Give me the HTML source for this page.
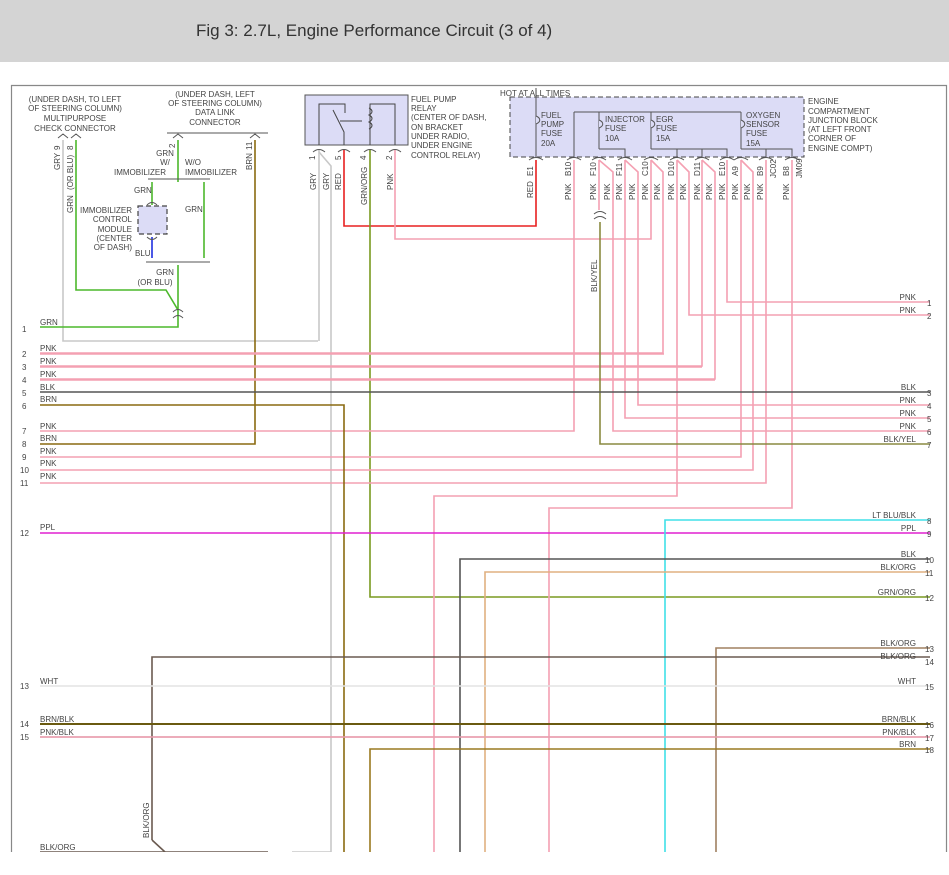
<!DOCTYPE html>
<html><head><meta charset="utf-8"><style>
html,body{margin:0;padding:0;background:#fff;width:949px;height:875px;overflow:hidden}
.hdr{position:absolute;left:0;top:0;width:949px;height:62px;background:#d4d4d4}
.hdr span{position:absolute;left:196px;top:21px;font:17px "Liberation Sans",sans-serif;color:#333}
svg{position:absolute;left:0;top:0}
text{font-family:"Liberation Sans",sans-serif;font-size:8px;fill:#444}
</style></head><body>
<div class="hdr"><span>Fig 3: 2.7L, Engine Performance Circuit (3 of 4)</span></div>
<svg width="949" height="875" viewBox="0 0 949 875">
<defs><clipPath id="c"><rect x="0" y="0" width="949" height="852"/></clipPath></defs>
<g clip-path="url(#c)" fill="none" stroke-width="1.6">
<!-- frame -->
<path d="M11.5 875V85.5H946.5V875" stroke="#888" stroke-width="1.2"/>
<!-- relay box -->
<rect x="305" y="95" width="103" height="50" fill="#dcdcf6" stroke="#555" stroke-width="1"/>
<path d="M319 145V104H345V113M370 145V104H395V145M344 145V132L333 110M340 121H362" stroke="#444" stroke-width="1"/>
<path d="M369 108c4 2 4 5 0 7c4 2 4 5 0 7c4 2 4 5 0 7" stroke="#444" stroke-width="1"/>
<!-- junction box -->
<rect x="510" y="97" width="294" height="60" fill="#dcdcf6" stroke="#444" stroke-width="1" stroke-dasharray="5,3"/>
<path d="M536 88V157M574 112H741M574 112V157M599 112V149M651 112V149M741 112V149M599 149H625V157M651 149H727V157M677 149V157M702 149V157M741 149H792V157M766 149V157" stroke="#555" stroke-width="1"/>
<path d="M536 116c5 2 5 6 0 8M599 120c5 2 5 6 0 8M651 120c5 2 5 6 0 8M741 120c5 2 5 6 0 8" stroke="#555" stroke-width="1" fill="#dcdcf6"/>
<!-- wires: left top -->
<path d="M63 140V341H318" stroke="#c8c8c8"/>
<path d="M76 140V290H166L178 310" stroke="#4cb82c"/>
<path d="M178 140V182M152 182V205M204 182V258M178 265V327H40" stroke="#4cb82c"/>
<path d="M152 237V258" stroke="#2030e0"/>
<rect x="138" y="206" width="29" height="28" fill="#dcdcf6" stroke="#444" stroke-width="1.2" stroke-dasharray="5,3"/>
<path d="M255 140V444H40" stroke="#8a6a10"/>
<path d="M148 179L178 179M178 179L210 179M146 262H210M167 133H268" stroke="#555" stroke-width="1"/>
<!-- relay wires -->
<path d="M319 150V341" stroke="#c8c8c8"/>
<path d="M319 152L331 166V852H292" stroke="#c8c8c8"/>
<path d="M344 150V226H536V160" stroke="#e82020"/>
<path d="M370 150V597H930" stroke="#7a9a20"/>
<path d="M395 150V239H651V160" stroke="#f4a0b2"/>
<!-- pink junction wires -->
<g stroke="#f4a0b2">
<path d="M574 160V431H40"/>
<path d="M599 160V210"/>
<path d="M599 160L613 172V431H930"/>
<path d="M625 160V418H930"/>
<path d="M625 160L638 172V405H930"/>
<path d="M651 160L663 172V353H40"/>
<path d="M677 160V496H434V852"/>
<path d="M677 160L689 172V315H930"/>
<path d="M702 160V366H40"/>
<path d="M702 160L715 172V379H40"/>
<path d="M727 160V302H930"/>
<path d="M741 160V457H40"/>
<path d="M741 160L753 172V470H40"/>
<path d="M766 160V483H40"/>
<path d="M792 160V508H549V852"/>
<path d="M40 354H664M40 367H702M40 380H715M40 737H930" />
</g>
<path d="M600 222V444H930" stroke="#8a8a40"/>
<path d="M40 392H930" stroke="#555"/>
<path d="M40 405H344V852" stroke="#8a6a10"/>
<path d="M40 533H930" stroke="#e020d0"/>
<path d="M665 852V520H930" stroke="#40e0e8"/>
<path d="M460 852V559H930" stroke="#555"/>
<path d="M485 852V572H930" stroke="#e0b080"/>
<path d="M716 852V648H930" stroke="#a08060"/>
<path d="M40 852H268M152 840V657H930" stroke="#6a5a50"/>
<path d="M152 840L165 852" stroke="#6a5a50"/>
<path d="M40 686H930" stroke="#e4e4e4"/>
<path d="M40 724H930" stroke="#6a5a10" stroke-width="2"/>
<path d="M40 737H930" stroke="#e8a0b0"/>
<path d="M370 852V749H930" stroke="#9a7a20"/>
<!-- connector arcs -->
<g stroke="#555" stroke-width="1">
<path d="M313 152q6-5 12 0M338 152q6-5 12 0M364 152q6-5 12 0M389 152q6-5 12 0"/>
<path d="M529 160q7 -5 14 0M567 160q7-5 14 0M592 160q7-5 14 0M618 160q7-5 14 0M644 160q7-5 14 0M670 160q7-5 14 0M695 160q7-5 14 0M720 160q7-5 14 0M734 160q7-5 14 0M759 160q7-5 14 0M785 160q7-5 14 0"/>
<path d="M594 214q6-5 12 0M594 219q6-5 12 0"/>
<path d="M58 138l5-4 5 4M71 138l5-4 5 4M173 138l5-4 5 4M250 138l5-4 5 4"/>
<path d="M147 205q5-5 10 0M147 237q5 5 10 0M173 312q5-5 10 0M173 318q5-5 10 0"/>
</g>
</g>
<!-- texts -->
<g>
<text x="75" y="102" text-anchor="middle">(UNDER DASH, TO LEFT</text>
<text x="75" y="111" text-anchor="middle">OF STEERING COLUMN)</text>
<text x="75" y="121" text-anchor="middle">MULTIPURPOSE</text>
<text x="75" y="131" text-anchor="middle">CHECK CONNECTOR</text>
<text x="215" y="97" text-anchor="middle">(UNDER DASH, LEFT</text>
<text x="215" y="106" text-anchor="middle">OF STEERING COLUMN)</text>
<text x="215" y="115" text-anchor="middle">DATA LINK</text>
<text x="215" y="125" text-anchor="middle">CONNECTOR</text>
<text x="165" y="156" text-anchor="middle">GRN</text>
<text x="165" y="165" text-anchor="middle">W/</text>
<text x="140" y="175" text-anchor="middle">IMMOBILIZER</text>
<text x="185" y="165">W/O</text>
<text x="185" y="175">IMMOBILIZER</text>
<text x="134" y="193">GRN</text>
<text x="185" y="212">GRN</text>
<text x="132" y="213" text-anchor="end">IMMOBILIZER</text>
<text x="132" y="222" text-anchor="end">CONTROL</text>
<text x="132" y="232" text-anchor="end">MODULE</text>
<text x="132" y="241" text-anchor="end">(CENTER</text>
<text x="132" y="250" text-anchor="end">OF DASH)</text>
<text x="135" y="256">BLU</text>
<text x="165" y="275" text-anchor="middle">GRN</text>
<text x="155" y="285" text-anchor="middle">(OR BLU)</text>
<text x="411" y="102">FUEL PUMP</text>
<text x="411" y="111">RELAY</text>
<text x="411" y="120">(CENTER OF DASH,</text>
<text x="411" y="130">ON BRACKET</text>
<text x="411" y="139">UNDER RADIO,</text>
<text x="411" y="148">UNDER ENGINE</text>
<text x="411" y="158">CONTROL RELAY)</text>
<text x="500" y="96">HOT AT ALL TIMES</text>
<text x="541" y="118">FUEL</text><text x="541" y="127">PUMP</text><text x="541" y="136">FUSE</text><text x="541" y="146">20A</text>
<text x="605" y="122">INJECTOR</text><text x="605" y="131">FUSE</text><text x="605" y="141">10A</text>
<text x="656" y="122">EGR</text><text x="656" y="131">FUSE</text><text x="656" y="141">15A</text>
<text x="746" y="118">OXYGEN</text><text x="746" y="127">SENSOR</text><text x="746" y="136">FUSE</text><text x="746" y="146">15A</text>
<text x="808" y="104">ENGINE</text><text x="808" y="114">COMPARTMENT</text><text x="808" y="123">JUNCTION BLOCK</text><text x="808" y="132">(AT LEFT FRONT</text><text x="808" y="141">CORNER OF</text><text x="808" y="151">ENGINE COMPT)</text>
</g>
<!-- rotated labels -->
<g>
<text transform="translate(60,170) rotate(-90)">GRY</text>
<text transform="translate(60,150) rotate(-90)">9</text>
<text transform="translate(73,190) rotate(-90)">(OR BLU)</text>
<text transform="translate(73,150) rotate(-90)">8</text>
<text transform="translate(73,213) rotate(-90)">GRN</text>
<text transform="translate(175,148) rotate(-90)">2</text>
<text transform="translate(252,150) rotate(-90)">11</text>
<text transform="translate(252,170) rotate(-90)">BRN</text>
<text transform="translate(315,160) rotate(-90)">1</text>
<text transform="translate(341,160) rotate(-90)">5</text>
<text transform="translate(366,160) rotate(-90)">4</text>
<text transform="translate(392,160) rotate(-90)">2</text>
<text transform="translate(316,190) rotate(-90)">GRY</text>
<text transform="translate(329,190) rotate(-90)">GRY</text>
<text transform="translate(341,190) rotate(-90)">RED</text>
<text transform="translate(367,205) rotate(-90)">GRN/ORG</text>
<text transform="translate(393,190) rotate(-90)">PNK</text>
<text transform="translate(533,176) rotate(-90)">E1</text>
<text transform="translate(533,198) rotate(-90)">RED</text>
<text transform="translate(571,176) rotate(-90)">B10</text>
<text transform="translate(596,176) rotate(-90)">F10</text>
<text transform="translate(622,176) rotate(-90)">F11</text>
<text transform="translate(648,176) rotate(-90)">C10</text>
<text transform="translate(674,176) rotate(-90)">D10</text>
<text transform="translate(700,176) rotate(-90)">D11</text>
<text transform="translate(725,176) rotate(-90)">E10</text>
<text transform="translate(738,176) rotate(-90)">A9</text>
<text transform="translate(763,176) rotate(-90)">B9</text>
<text transform="translate(776,178) rotate(-90)">JC02</text>
<text transform="translate(789,176) rotate(-90)">B8</text>
<text transform="translate(802,178) rotate(-90)">JM09</text>
<text transform="translate(571,200) rotate(-90)">PNK</text>
<text transform="translate(596,200) rotate(-90)">PNK</text>
<text transform="translate(610,200) rotate(-90)">PNK</text>
<text transform="translate(622,200) rotate(-90)">PNK</text>
<text transform="translate(635,200) rotate(-90)">PNK</text>
<text transform="translate(648,200) rotate(-90)">PNK</text>
<text transform="translate(660,200) rotate(-90)">PNK</text>
<text transform="translate(674,200) rotate(-90)">PNK</text>
<text transform="translate(686,200) rotate(-90)">PNK</text>
<text transform="translate(700,200) rotate(-90)">PNK</text>
<text transform="translate(712,200) rotate(-90)">PNK</text>
<text transform="translate(725,200) rotate(-90)">PNK</text>
<text transform="translate(738,200) rotate(-90)">PNK</text>
<text transform="translate(750,200) rotate(-90)">PNK</text>
<text transform="translate(763,200) rotate(-90)">PNK</text>
<text transform="translate(789,200) rotate(-90)">PNK</text>
<text transform="translate(597,292) rotate(-90)">BLK/YEL</text>
<text transform="translate(149,838) rotate(-90)">BLK/ORG</text>
</g>
<!-- left row labels -->
<g>
<text x="22" y="332">1</text><text x="40" y="325">GRN</text>
<text x="22" y="357">2</text><text x="40" y="351">PNK</text>
<text x="22" y="370">3</text><text x="40" y="364">PNK</text>
<text x="22" y="383">4</text><text x="40" y="377">PNK</text>
<text x="22" y="396">5</text><text x="40" y="390">BLK</text>
<text x="22" y="409">6</text><text x="40" y="402">BRN</text>
<text x="22" y="434">7</text><text x="40" y="429">PNK</text>
<text x="22" y="447">8</text><text x="40" y="441">BRN</text>
<text x="22" y="460">9</text><text x="40" y="454">PNK</text>
<text x="20" y="473">10</text><text x="40" y="466">PNK</text>
<text x="20" y="486">11</text><text x="40" y="479">PNK</text>
<text x="20" y="536">12</text><text x="40" y="530">PPL</text>
<text x="20" y="689">13</text><text x="40" y="684">WHT</text>
<text x="20" y="727">14</text><text x="40" y="722">BRN/BLK</text>
<text x="20" y="740">15</text><text x="40" y="735">PNK/BLK</text>
<text x="40" y="850">BLK/ORG</text>
</g>
<!-- right row labels -->
<g text-anchor="end">
<text x="916" y="300">PNK</text><text x="916" y="313">PNK</text>
<text x="916" y="390">BLK</text><text x="916" y="403">PNK</text><text x="916" y="416">PNK</text><text x="916" y="429">PNK</text><text x="916" y="442">BLK/YEL</text>
<text x="916" y="518">LT BLU/BLK</text><text x="916" y="531">PPL</text>
<text x="916" y="557">BLK</text><text x="916" y="570">BLK/ORG</text><text x="916" y="595">GRN/ORG</text>
<text x="916" y="646">BLK/ORG</text><text x="916" y="659">BLK/ORG</text><text x="916" y="684">WHT</text>
<text x="916" y="722">BRN/BLK</text><text x="916" y="735">PNK/BLK</text><text x="916" y="747">BRN</text>
</g>
<g>
<text x="927" y="306">1</text><text x="927" y="319">2</text><text x="927" y="396">3</text><text x="927" y="409">4</text><text x="927" y="422">5</text><text x="927" y="435">6</text><text x="927" y="448">7</text>
<text x="927" y="524">8</text><text x="927" y="537">9</text><text x="925" y="563">10</text><text x="925" y="576">11</text><text x="925" y="601">12</text><text x="925" y="652">13</text><text x="925" y="665">14</text><text x="925" y="690">15</text><text x="925" y="728">16</text><text x="925" y="741">17</text><text x="925" y="753">18</text>
</g>
</svg>
</body></html>
